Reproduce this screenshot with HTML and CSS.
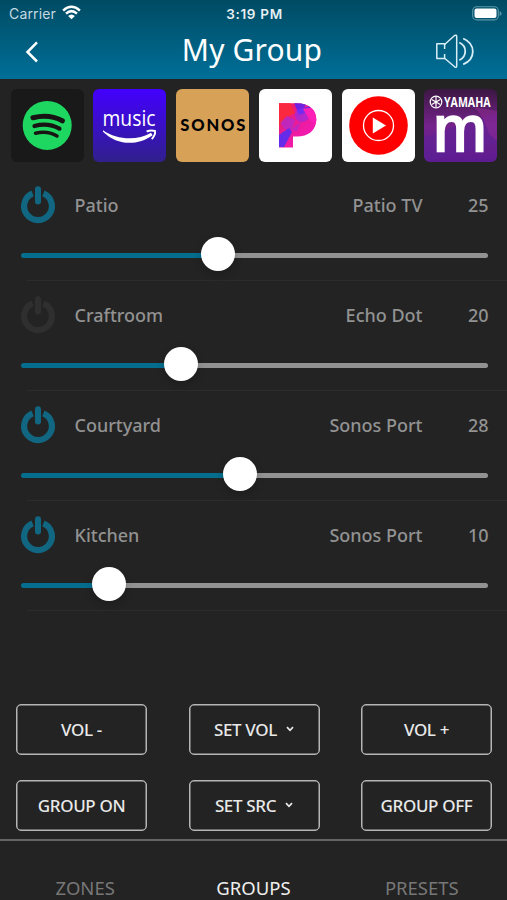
FILE: index.html
```html
<!DOCTYPE html>
<html lang="en">
<head>
<meta charset="utf-8">
<title>My Group</title>
<link rel="stylesheet" href="styles.css">
</head>
<body>
<svg width="0" height="0" class="defs" aria-hidden="true">
  <symbol id="power" viewBox="0 0 36 40">
    <path d="M12.6 8.4A13.9 13.9 0 1 0 23.4 8.4" fill="none" stroke="currentColor" stroke-width="6.2"/>
    <path d="M18 4.2V16.4" stroke="currentColor" stroke-width="6" stroke-linecap="round"/>
  </symbol>
</svg>
<div class="app">
  <header class="top">
    <div class="status">
      <div class="carrier"><span>Carrier</span>
        <svg width="19" height="15" viewBox="0 0 19 15"><g fill="none" stroke="#fff" stroke-width="2.5"><path d="M1.1 5.6Q9.5-2 17.9 5.6"/><path d="M4 8.6Q9.5 3.6 15 8.6"/></g><path d="M6.1 10.9Q9.5 7.9 12.9 10.9L9.5 14.3Z" fill="#fff"/></svg>
      </div>
      <div class="clock">3:19 PM</div>
      <div class="battery"><svg width="30" height="15" viewBox="0 0 30 15"><rect x=".7" y=".7" width="25.6" height="13.2" rx="4" fill="none" stroke="#5d97a8" stroke-width="1.1"/><rect x="2.5" y="2.5" width="22" height="9.6" rx="2" fill="#fff"/><path d="M27.7 5V10Q29.6 9 29.6 7.5T27.7 5Z" fill="#5d97a8"/></svg></div>
    </div>
    <div class="nav">
      <svg width="14" height="22" viewBox="0 0 14 22"><path d="M12 1.4L2.5 11L12 20.5" fill="none" stroke="#fff" stroke-width="2.5"/></svg>
      <h1>My Group</h1>
      <svg width="40" height="36" viewBox="0 0 40 36" fill="none" stroke="#d8eef6" stroke-width="1.5" stroke-linejoin="round"><path d="M9.6 15V9.8H1.8V24.6H9.6V20"/><path d="M9.6 10.5L19.6 1.5Q21.7.5 21.7 2.5V32Q21.7 34 19.6 32.8L9.6 24.2"/><path d="M24.3 8.5C32.2 12 32.2 22.5 24.3 26.3M28.2 4.5C41 10 41 25 28.2 30.3" stroke-width="1.8"/></svg>
    </div>
  </header>

  <section class="services">
    <div class="tile spotify"><svg viewBox="0 0 73 73"><circle cx="36.2" cy="36.4" r="24.5" fill="#1ed760"/><g fill="none" stroke="#191414" stroke-linecap="round"><path d="M22 28.7Q38 24.7 51.3 31.7" stroke-width="5.2"/><path d="M23.5 37Q37 33.3 48.4 39.6" stroke-width="4.3"/><path d="M24.5 44.2Q36.5 41.4 46 47" stroke-width="3.5"/></g></svg></div>
    <div class="tile amazon"><svg viewBox="0 0 73 73"><text x="9.5" y="36.7" font-size="21.5" textLength="53" lengthAdjust="spacingAndGlyphs">music</text><path d="M10 41.2C24 51 44 52 58 43.8L59.6 46.2C44 57.4 24 56.4 10 42.7Z"/><path d="M53.6 42.5Q58 40.8 62 42Q62.8 45.5 58.8 50.2" fill="none" stroke="#fff" stroke-width="1.9"/></svg></div>
    <div class="tile sonos"><svg viewBox="0 0 73 73"><text x="4.3" y="42.2" font-size="16.5" textLength="65">SONOS</text></svg></div>
    <div class="tile pandora"><svg viewBox="0 0 73 73">
      <defs><linearGradient id="pg" x1="0" y1="0" x2="1" y2="1"><stop offset="0" stop-color="#ff1737"/><stop offset=".35" stop-color="#e51d91"/><stop offset="1" stop-color="#ff18c6"/></linearGradient><clipPath id="pc"><path d="M20 14.2H38C50 14.2 57.3 20.5 57.3 30.5C57.3 41.5 49 47.5 38 47.5H34V58.5H20Z"/></clipPath></defs>
      <g clip-path="url(#pc)"><rect x="20" y="14" width="38" height="45" fill="url(#pg)"/><path d="M20 14H31L36 24L26 29L20 38Z" fill="#fb293f"/><path d="M35 14H49L44 19L52 17L50 22L40 26Z" fill="#6f22df"/><path d="M21 34L28 27L36 31L33 40L42 33L38 42L26 40Z" fill="#b22bcc" opacity=".75"/><path d="M20 46L30 39L33 43L25 58H20Z" fill="#652bea"/><circle cx="43" cy="26" r="7" fill="#7a31ff" opacity=".5"/><path d="M44 20Q54 17 58 22V36L50 30Z" fill="#ff20b8"/></g></svg></div>
    <div class="tile youtube"><svg viewBox="0 0 73 73"><circle cx="36.5" cy="36.5" r="29.3" fill="#f00"/><circle cx="36.5" cy="36.5" r="15" fill="none" stroke="#fff" stroke-width="1.3"/><path d="M30.8 28.5L44 36.5L30.8 44.5Z" fill="#fff"/></svg></div>
    <div class="tile yamaha"><svg viewBox="0 0 73 73"><path d="M0 48Q36 36 73 24V54Q40 65 0 73Z" fill="#5c2297" opacity=".5"/><path d="M50 18Q60 27 65 45L73 52V22Z" fill="#a12c9c" opacity=".4"/><g fill="none" stroke="#fff" stroke-width="1.2"><circle cx="12" cy="13" r="5.8"/><path d="M12 8V18M7.7 10.5L16.3 15.5M7.7 15.5L16.3 10.5"/></g><text class="brand" x="20" y="18.3" font-size="15" textLength="46.5" lengthAdjust="spacingAndGlyphs">YAMAHA</text><text class="m" x="9.5" y="62.3" font-size="65" textLength="53" lengthAdjust="spacingAndGlyphs">m</text></svg></div>
  </section>

  <main class="zones">
    <div class="zone">
      <div class="info"><svg class="power on"><use href="#power"/></svg><span class="name">Patio</span><span class="source">Patio TV</span><span class="level">25</span></div>
      <div class="slider"><div class="fill" style="width:197px"></div><div class="thumb"></div><div class="rest"></div></div>
    </div>
    <div class="zone">
      <div class="info"><svg class="power"><use href="#power"/></svg><span class="name">Craftroom</span><span class="source">Echo Dot</span><span class="level">20</span></div>
      <div class="slider"><div class="fill" style="width:160px"></div><div class="thumb"></div><div class="rest"></div></div>
    </div>
    <div class="zone">
      <div class="info"><svg class="power on"><use href="#power"/></svg><span class="name">Courtyard</span><span class="source">Sonos Port</span><span class="level">28</span></div>
      <div class="slider"><div class="fill" style="width:219px"></div><div class="thumb"></div><div class="rest"></div></div>
    </div>
    <div class="zone">
      <div class="info"><svg class="power on"><use href="#power"/></svg><span class="name">Kitchen</span><span class="source">Sonos Port</span><span class="level">10</span></div>
      <div class="slider"><div class="fill" style="width:88px"></div><div class="thumb"></div><div class="rest"></div></div>
    </div>
  </main>

  <section class="actions">
    <button>VOL -</button>
    <button>SET VOL<svg class="caret" viewBox="0 0 8 6"><path d="M1 1.2L4 4.3L7 1.2"/></svg></button>
    <button>VOL +</button>
    <button>GROUP ON</button>
    <button>SET SRC<svg class="caret" viewBox="0 0 8 6"><path d="M1 1.2L4 4.3L7 1.2"/></svg></button>
    <button>GROUP OFF</button>
  </section>

  <nav class="tabs"><span>ZONES</span><span class="active">GROUPS</span><span>PRESETS</span></nav>
</div>
</body>
</html>
```

FILE: styles.css
```css
* { box-sizing: border-box; }
body { margin: 0; background: #232323; font-family: "Noto Sans", sans-serif; overflow: hidden; }
svg { display: block; flex: none; }
.defs { position: absolute; }
.app { width: 507px; height: 900px; display: flex; flex-direction: column; overflow: hidden; }

.top { height: 79px; flex: none; background: linear-gradient(#004b63, #006f98); color: #fff; }
.status { height: 27px; display: grid; grid-template-columns: 1fr auto 1fr; align-items: center; padding: 0 7px 0 9px; font-family: Inter, sans-serif; font-size: 14px; }
.carrier { display: flex; align-items: center; gap: 6px; color: #c5dae1; letter-spacing: .15px; }
.carrier svg { margin-top: -2px; }
.clock { margin-left: -3px; font-size: 13.5px; font-weight: 600; letter-spacing: .7px; margin-right: -3px; color: #e7f0f3; }
.battery { display: flex; justify-content: flex-end; margin-right: -2px; }
.nav { height: 50px; display: grid; grid-template-columns: 1fr auto 1fr; align-items: center; padding: 0 32px 0 25px; }
.nav h1 { margin: -5px -4px 0 0; font-size: 30px; line-height: 40px; font-weight: 400; letter-spacing: .15px; }
.nav svg:last-child { justify-self: end; }

.services { height: 92px; flex: none; display: flex; justify-content: space-between; padding: 10px 9.5px 0 10.5px; }
.tile { width: 73px; height: 73px; border-radius: 6px; overflow: hidden; }
.tile svg { width: 73px; height: 73px; }
.tile text { fill: #fff; font-family: "Open Sans", sans-serif; }
.spotify { background: #191919; }
.amazon { background: linear-gradient(#4300ff, #30208c); }
.amazon text { font-weight: 500; }
.amazon path { fill: #fff; }
.amazon path:last-child { fill: none; }
.sonos { background: #d8a158; }
.sonos text { fill: #000; font-family: Lato, sans-serif; font-weight: 900; }
.pandora, .youtube { background: #fff; }
.yamaha { background: linear-gradient(#3b1742, #74238b 50%, #5d1b91); }
.yamaha text { font-weight: 700; }
.yamaha .m { font-family: "Liberation Sans", sans-serif; font-weight: 400; stroke: #fff; stroke-width: 2.4; }

.zones { height: 440px; flex: none; }
.zone { height: 110px; display: flex; flex-direction: column; background: linear-gradient(#2c2c2c, #2c2c2c) 27px 100% / 480px 1px no-repeat; }
.info { height: 66px; display: flex; align-items: center; padding: 2px 18.5px 0 19.5px; color: #929292; font-size: 18px; font-weight: 500; }
.power { width: 36px; height: 40px; color: #2f2f2f; }
.power.on { color: #116681; }
.name { margin-left: 19px; flex: 1; }
.source { text-align: right; }
.level { width: 66px; text-align: right; }
.slider { height: 34px; margin: 0 19px 0 20.5px; display: flex; align-items: center; }
.fill, .rest { height: 5px; margin-top: 2px; border-radius: 3px; }
.fill { background: #056d8e; margin-right: -17px; }
.rest { background: #929292; flex: 1; margin-left: -3px; }
.thumb { width: 34px; height: 34px; margin-top: -1px; border-radius: 50%; background: #fff; z-index: 1; flex: none; box-shadow: 0 3px 8px rgba(0,0,0,.2); }

.actions { height: 228px; flex: none; padding: 92.5px 15px 0 16px; display: grid; grid-template-columns: repeat(3, 131px); grid-auto-rows: 51px; justify-content: space-between; row-gap: 25px; }
button { display: flex; align-items: center; justify-content: center; padding: 1px 0 0; border: 1.5px solid #b5b5b5; box-shadow: inset 0 0 0 .5px #b5b5b5; border-radius: 5px; background: transparent; color: #e9e9e9; font: 500 17px/1 "Noto Sans", sans-serif; letter-spacing: -.35px; }
.caret { width: 8px; height: 6px; margin: 0 0 1px 9px; fill: none; stroke: #e9e9e9; stroke-width: 1.7; }

.tabs { height: 61px; flex: none; border-top: 2px solid #656565; display: grid; grid-template-columns: repeat(3, 1fr); padding: 35px 1px 0; text-align: center; font-size: 18.5px; line-height: 24px; letter-spacing: 0; color: #777; }
.tabs .active { color: #eee; }
```
